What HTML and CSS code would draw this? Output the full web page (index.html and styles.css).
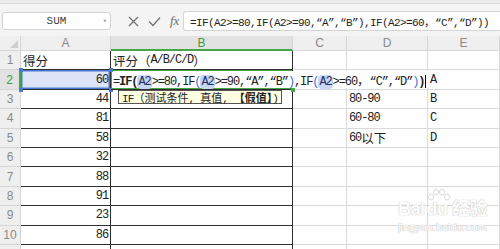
FILE: index.html
```html
<!DOCTYPE html>
<html lang="zh">
<head>
    <meta charset="UTF-8">
    <title>IF 公式</title>
    <link rel="stylesheet" href="styles.css">
</head>
<body>
    <div class="topbar"></div>

    <div class="toolbar">
        <div class="namebox">SUM<span class="drop">▾</span></div>
        <div class="tools">
            <svg class="icon" width="11" height="11" viewBox="0 0 11 11"><path d="M1 1 L10 10 M10 1 L1 10" stroke="#6f6f6f" stroke-width="1.2" fill="none"/></svg>
            <svg class="icon" width="13" height="11" viewBox="0 0 13 11"><path d="M1 5.5 L5 9.5 L12 1.5" stroke="#6f6f6f" stroke-width="1.2" fill="none"/></svg>
            <span class="fx">fx</span>
        </div>
        <div class="formula">=IF(A2&gt;=80,IF(A2&gt;=90,“A”,“B”),IF(A2&gt;=60<span class="zh">，</span>“C”,“D”))</div>
    </div>

    <div class="sheet">
        <!-- header -->
        <div class="corner"><span class="tri"></span></div>
        <div class="colhead">A</div>
        <div class="colhead active">B</div>
        <div class="colhead">C</div>
        <div class="colhead">D</div>
        <div class="colhead">E</div>

        <!-- row 1 -->
        <div class="rowhead">1</div>
        <div class="cell dark"><span class="zh">得分</span></div>
        <div class="cell dark"><span class="zh">评分（</span>A/B/C/D<span class="zh">）</span></div>
        <div class="cell"></div>
        <div class="cell"></div>
        <div class="cell"></div>

        <!-- row 2 -->
        <div class="rowhead active">2</div>
        <div class="cell dark num selected">60
            <i class="handle tl"></i><i class="handle tr"></i><i class="handle bl"></i><i class="handle br"></i>
        </div>
        <div class="cell dark editing">
            <span class="edit">=<b>IF(</b><span class="ref">A2</span>&gt;=80,IF<span class="p">(</span><span class="ref">A2</span>&gt;=90,“A”,“B”<span class="p">)</span>,IF<span class="p">(</span><span class="ref">A2</span>&gt;=60<span class="zh">，</span>“C”,“D”<span class="p">)</span><b>)</b><i class="caret"></i></span>
            <div class="tip">IF<span class="zh">（测试条件</span>, <span class="zh">真值</span>, <b class="zh">【假值】</b>)</div>
            <i class="handle gr"></i>
        </div>
        <div class="cell"></div>
        <div class="cell"></div>
        <div class="cell">A</div>

        <!-- row 3 -->
        <div class="rowhead">3</div>
        <div class="cell dark num">44</div>
        <div class="cell dark"></div>
        <div class="cell"></div>
        <div class="cell">80-90</div>
        <div class="cell">B</div>

        <!-- row 4 -->
        <div class="rowhead">4</div>
        <div class="cell dark num">81</div>
        <div class="cell dark"></div>
        <div class="cell"></div>
        <div class="cell">60-80</div>
        <div class="cell">C</div>

        <!-- row 5 -->
        <div class="rowhead">5</div>
        <div class="cell dark num">58</div>
        <div class="cell dark"></div>
        <div class="cell"></div>
        <div class="cell">60<span class="zh">以下</span></div>
        <div class="cell">D</div>

        <!-- row 6 -->
        <div class="rowhead">6</div>
        <div class="cell dark num">32</div>
        <div class="cell dark"></div>
        <div class="cell"></div>
        <div class="cell"></div>
        <div class="cell"></div>

        <!-- row 7 -->
        <div class="rowhead">7</div>
        <div class="cell dark num">88</div>
        <div class="cell dark"></div>
        <div class="cell"></div>
        <div class="cell"></div>
        <div class="cell"></div>

        <!-- row 8 -->
        <div class="rowhead">8</div>
        <div class="cell dark num">91</div>
        <div class="cell dark"></div>
        <div class="cell"></div>
        <div class="cell"></div>
        <div class="cell"></div>

        <!-- row 9 -->
        <div class="rowhead">9</div>
        <div class="cell dark num">23</div>
        <div class="cell dark"></div>
        <div class="cell"></div>
        <div class="cell"></div>
        <div class="cell"></div>

        <!-- row 10 -->
        <div class="rowhead">10</div>
        <div class="cell dark num">86</div>
        <div class="cell dark"></div>
        <div class="cell"></div>
        <div class="cell"></div>
        <div class="cell"></div>

        <!-- row 11, only its top edge is in view -->
        <div class="rowhead"></div>
        <div class="cell dark"></div>
        <div class="cell dark"></div>
        <div class="cell"></div>
        <div class="cell"></div>
        <div class="cell"></div>
    </div>

    <!-- watermark -->
    <div class="watermark">
        <svg class="paw" width="26" height="14" viewBox="0 0 26 14">
            <g fill="#ffffff" stroke="#cfcfcf" stroke-width="0.8">
                <ellipse cx="5" cy="9" rx="2.5" ry="3"/>
                <ellipse cx="10" cy="4" rx="2.5" ry="3"/>
                <ellipse cx="16" cy="4" rx="2.5" ry="3"/>
                <ellipse cx="21" cy="9" rx="2.5" ry="3"/>
            </g>
        </svg>
        <div class="wm-big">Bai<span class="wm-du">du</span> 经验</div>
        <div class="wm-small">jingyan.baidu.com</div>
    </div>
</body>
</html>
```

FILE: styles.css
```css
/* Reset */
* {
    margin: 0;
    padding: 0;
    box-sizing: border-box;
}

body {
    width: 500px;
    height: 249px;
    overflow: hidden;
    background-color: #ffffff;
    font-family: "Liberation Sans", "Noto Sans CJK SC", sans-serif;
    position: relative;
}

.zh {
    font-family: "Noto Sans CJK SC", sans-serif;
    letter-spacing: 0;
}

/* top strip + formula bar */
.topbar {
    height: 4px;
    background-color: #ececec;
    border-bottom: 1px solid #dcdcdc;
}

.toolbar {
    height: 32px;
    background-color: #f4f4f4;
    display: flex;
    align-items: center;
    padding: 2px 0 0 2px;
}

.namebox {
    width: 109px;
    height: 18px;
    background-color: #ffffff;
    border: 1px solid #d4d4d4;
    border-radius: 3px;
    position: relative;
    font: 11px "Liberation Mono", monospace;
    color: #444;
    text-align: center;
    line-height: 16px;
}

.drop {
    position: absolute;
    right: 3px;
    top: 0;
    font-size: 7px;
    color: #999;
}

.tools {
    width: 72px;
    display: flex;
    align-items: center;
    gap: 9px;
    padding-left: 17px;
}

.fx {
    font: italic 13px "Liberation Serif", serif;
    color: #6f6f6f;
}

.formula {
    flex: 1;
    height: 20px;
    background-color: #ffffff;
    border: 1px solid #d4d4d4;
    border-right: none;
    border-radius: 3px 0 0 3px;
    padding-left: 6px;
    font: 11px "Liberation Mono", monospace;
    letter-spacing: -0.6px;
    line-height: 18px;
    color: #222;
    white-space: nowrap;
    overflow: hidden;
}

.formula .zh {
    font-size: 11px;
}

/* sheet grid */
.sheet {
    display: grid;
    grid-template-columns: 21px 90px 182px 54px 81px 72px;
    grid-template-rows: 15px repeat(11, 19.4px);
}

.corner, .colhead, .rowhead {
    background-color: #efefef;
    color: #8a8a8a;
    font-size: 12px;
    border-right: 1px solid #d6d6d6;
    border-bottom: 1px solid #d6d6d6;
    display: flex;
    align-items: center;
    justify-content: center;
}

.corner {
    position: relative;
}

.tri {
    position: absolute;
    right: 2px;
    bottom: 2px;
    width: 0;
    height: 0;
    border-left: 8px solid transparent;
    border-bottom: 8px solid #cfcfcf;
}

.colhead.active {
    background-color: #e2e2e2;
    color: #3e9d3e;
    border-bottom: 2px solid #46a546;
}

.rowhead.active {
    background-color: #e2e2e2;
    color: #3e9d3e;
    border-right: 2px solid #46a546;
}

.cell {
    border-right: 1px solid #dadada;
    border-bottom: 1px solid #dadada;
    font: 12px "Liberation Mono", monospace;
    letter-spacing: -1.1px;
    color: #222;
    padding: 0 2px;
    display: flex;
    align-items: center;
    white-space: nowrap;
}

.cell .zh {
    font-size: 12.5px;
}

.cell.dark {
    border-right-color: #2e2e2e;
    border-bottom-color: #2e2e2e;
}

.cell.num {
    justify-content: flex-end;
}

.selected {
    background-color: #dce4f5;
    box-shadow: inset 0 0 0 1.5px #4a78d0;
    position: relative;
}

.handle {
    position: absolute;
    width: 4px;
    height: 4px;
    background-color: #4a78d0;
}

.handle.tl { left: -2px; top: -2px; }
.handle.tr { right: -3px; top: -2px; }
.handle.bl { left: -2px; bottom: -3px; }
.handle.br { right: -3px; bottom: -3px; }

.handle.gr {
    right: -3px;
    bottom: -3px;
    background-color: #46a546;
}

/* formula being edited in B2 */
.editing {
    position: relative;
    z-index: 2;
    overflow: visible;
    box-shadow: inset 0 1px 0 #46a546, inset 1px 0 0 #46a546, inset 0 -1px 0 #46a546;
}

.edit {
    background-color: #ffffff;
    height: 17px;
    line-height: 17px;
    padding-right: 3px;
    color: #222;
}

.edit b {
    font-weight: bold;
}

.ref {
    background-color: #c8d6f1;
    border-radius: 4px;
    padding: 0 1px;
    color: #1d2f6a;
}

.p {
    color: #3f70d8;
}

.caret {
    display: inline-block;
    width: 1px;
    height: 13px;
    background-color: #000;
    vertical-align: middle;
    margin-left: 1px;
}

.tip {
    position: absolute;
    left: 7px;
    top: 20px;
    height: 14px;
    padding: 0 3px;
    background-color: #ffffe1;
    border: 1px solid #555;
    font: 11px "Liberation Mono", monospace;
    letter-spacing: -0.8px;
    line-height: 12px;
    color: #222;
}

.tip .zh {
    font-size: 11px;
}

/* watermark */
.watermark {
    position: absolute;
    left: 398px;
    top: 188px;
    color: #ffffff;
    text-shadow: 0 0 1px #bdbdbd, 0 0 1px #bdbdbd;
    white-space: nowrap;
    pointer-events: none;
}

.paw {
    display: block;
    margin-left: 28px;
    margin-bottom: -3px;
}

.wm-big {
    font: bold 18px "Liberation Sans", "Noto Sans CJK SC", sans-serif;
    line-height: 20px;
    letter-spacing: -0.5px;
}

.wm-du {
    margin-left: 2px;
}

.wm-small {
    font: 11px "Liberation Sans", sans-serif;
    line-height: 13px;
    margin-top: 2px;
}
```
